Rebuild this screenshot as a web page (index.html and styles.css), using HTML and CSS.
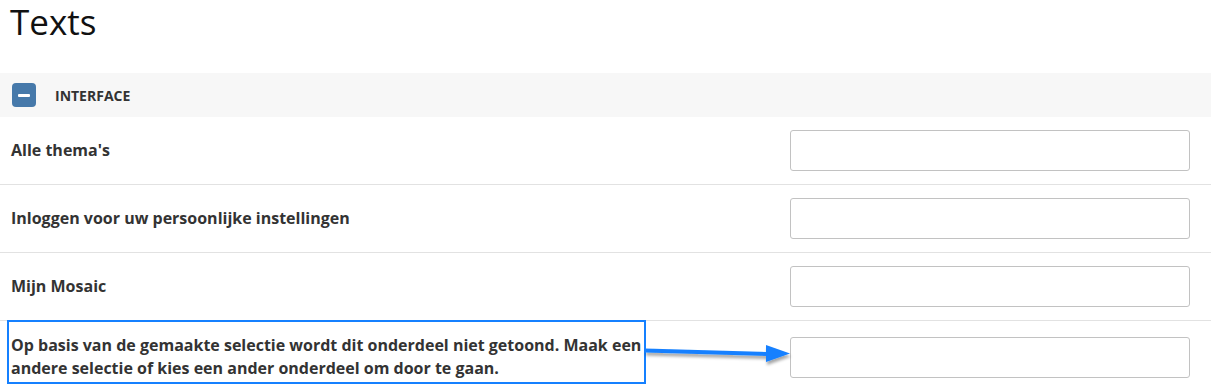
FILE: index.html
```html
<!DOCTYPE html>
<html lang="nl">
<head>
<meta charset="utf-8">
<title>Texts</title>
<link rel="stylesheet" href="styles.css">
</head>
<body>
<div class="page">
  <h1 class="title">Texts</h1>
  <div class="section-head">
    <span class="toggle"><span class="toggle-bar"></span></span>
    <span class="section-name">INTERFACE</span>
  </div>
  <div class="row">
    <div class="label">Alle thema's</div>
    <input class="field" type="text">
  </div>
  <div class="row">
    <div class="label">Inloggen voor uw persoonlijke instellingen</div>
    <input class="field" type="text">
  </div>
  <div class="row">
    <div class="label">Mijn Mosaic</div>
    <input class="field" type="text">
  </div>
  <div class="row">
    <div class="label">Op basis van de gemaakte selectie wordt dit onderdeel niet getoond. Maak een andere selectie of kies een ander onderdeel om door te gaan.</div>
    <input class="field" type="text">
  </div>
  <div class="note-box"></div>
  <svg class="note-arrow" width="170" height="40" viewBox="0 0 170 40" xmlns="http://www.w3.org/2000/svg">
    <defs>
      <filter id="sh" x="-10%" y="-50%" width="130%" height="200%">
        <feDropShadow dx="1" dy="3" stdDeviation="1.5" flood-color="#000" flood-opacity="0.35"/>
      </filter>
    </defs>
    <g filter="url(#sh)">
      <path d="M5 10.5 L128 14" stroke="#1580ff" stroke-width="4" fill="none"/>
      <polygon points="126,5 150,13.5 126,22" fill="#1580ff"/>
    </g>
  </svg>
</div>
</body>
</html>
```
FILE: styles.css
```css
* { box-sizing: border-box; }
html, body { margin: 0; padding: 0; background: #fff; }
body {
  font-family: "Open Sans", "Noto Sans", sans-serif;
  color: #333;
  width: 1211px;
  height: 390px;
  overflow: hidden;
}
.page { position: relative; }
.title {
  margin: 0 0 29px 0;
  padding-left: 10px;
  font-size: 35px;
  font-weight: 400;
  line-height: 44px;
  color: #111;
}
.section-head {
  display: flex;
  align-items: center;
  height: 44px;
  background: #f7f7f7;
  padding-left: 12px;
}
.toggle {
  width: 24px;
  height: 24px;
  border-radius: 4px;
  background: #4679aa;
  display: flex;
  align-items: center;
  justify-content: center;
}
.toggle-bar {
  width: 12px;
  height: 3px;
  border-radius: 1px;
  background: #fff;
}
.section-name {
  margin-left: 19px;
  font-size: 14px;
  font-weight: 700;
  color: #333;
}
.row {
  display: flex;
  align-items: center;
  justify-content: space-between;
  padding: 13px 21px 13px 11px;
  border-bottom: 1px solid #e2e2e2;
}
.label {
  width: 640px;
  font-size: 16px;
  font-weight: 700;
  line-height: 23px;
  color: #333;
}
.field {
  width: 400px;
  height: 41px;
  border: 1px solid #c2c2c2;
  border-radius: 3px;
  background: #fff;
  margin: 0;
}
.note-box {
  position: absolute;
  left: 7px;
  top: 320px;
  width: 639px;
  height: 64px;
  border: 2px solid #1580ff;
}
.note-arrow {
  position: absolute;
  left: 640px;
  top: 340px;
}
```
